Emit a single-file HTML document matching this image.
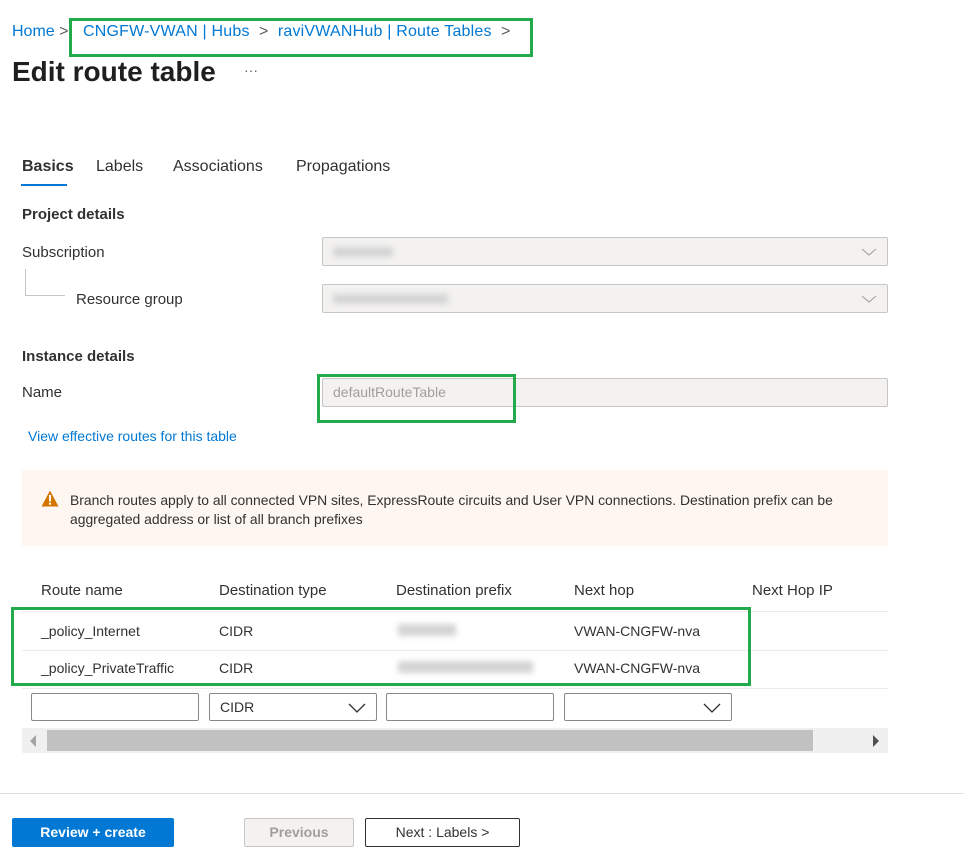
<!DOCTYPE html>
<html><head><meta charset="utf-8"><style>
*{margin:0;padding:0;box-sizing:border-box}
body{width:964px;height:863px;background:#fff;position:relative;overflow:hidden;font-family:"Segoe UI","Liberation Sans",sans-serif;color:#323130;font-size:15px}
.a{position:absolute;white-space:nowrap}
.lk{color:#0078d4}
.b{font-weight:600}
.g{position:absolute;border:3px solid #22aa4c}
.dd{position:absolute;background:#f3f2f1;border:1px solid #c8c6c4;border-radius:2px}
.in{position:absolute;background:#fff;border:1px solid #8a8886;border-radius:2px;height:28px}
.hl{position:absolute;height:1px;background:#edebe9;left:22px;width:866px}
.blur{position:absolute;background:#d4d4d4;filter:blur(3px)}
</style></head><body>
<div class="a lk" style="left:12px;top:23px;font-size:16px">Home <span style="color:#605e5c">&gt;</span></div>
<div class="a lk" style="left:83px;top:23px;font-size:16px;letter-spacing:0.2px">CNGFW-VWAN | Hubs <span style="color:#605e5c">&nbsp;&gt;&nbsp;</span> raviVWANHub | Route Tables <span style="color:#605e5c">&nbsp;&gt;</span></div>
<div class="g" style="left:69px;top:18px;width:464px;height:39px"></div>
<div class="a b" style="left:12px;top:56px;font-size:28px;color:#201f1e">Edit route table</div>
<div class="a" style="left:244px;top:62px;font-size:14px;color:#605e5c">···</div>

<div class="a b" style="left:22px;top:158px;font-size:16px">Basics</div>
<div style="position:absolute;left:21px;top:184px;width:46px;height:2px;background:#0078d4"></div>
<div class="a" style="left:96px;top:158px;font-size:16px">Labels</div>
<div class="a" style="left:173px;top:158px;font-size:16px">Associations</div>
<div class="a" style="left:296px;top:158px;font-size:16px">Propagations</div>

<div class="a b" style="left:22px;top:206px;font-size:15px">Project details</div>
<div class="a" style="left:22px;top:244px">Subscription</div>
<div style="position:absolute;left:25px;top:269px;width:40px;height:27px;border-left:1px solid #c8c6c4;border-bottom:1px solid #c8c6c4"></div>
<div class="a" style="left:76px;top:291px">Resource group</div>
<div class="dd" style="left:322px;top:237px;width:566px;height:29px"><div class="blur" style="left:10px;top:9px;width:60px;height:10px"></div>
<svg style="position:absolute;right:10px;top:9px" width="16" height="10"><path d="M1 2l7 6 7-6" fill="none" stroke="#a19f9d" stroke-width="1.1"/></svg></div>
<div class="dd" style="left:322px;top:284px;width:566px;height:29px"><div class="blur" style="left:10px;top:9px;width:115px;height:10px"></div>
<svg style="position:absolute;right:10px;top:9px" width="16" height="10"><path d="M1 2l7 6 7-6" fill="none" stroke="#a19f9d" stroke-width="1.1"/></svg></div>

<div class="a b" style="left:22px;top:348px">Instance details</div>
<div class="a" style="left:22px;top:384px">Name</div>
<div class="dd" style="left:322px;top:378px;width:566px;height:29px"><div class="a" style="left:10px;top:5px;color:#a19f9d;font-size:14px">defaultRouteTable</div></div>
<div class="g" style="left:317px;top:374px;width:199px;height:49px"></div>
<div class="a lk" style="left:28px;top:428px;font-size:14px">View effective routes for this table</div>

<div style="position:absolute;left:22px;top:470px;width:866px;height:76px;background:#fdf6f1"></div>
<svg style="position:absolute;left:41px;top:490px" width="18" height="17"><path d="M9 0.5L17.5 16.5H0.5Z" fill="#d47500"/><rect x="8" y="5" width="2" height="6.5" fill="#fff"/><rect x="8" y="12.7" width="2" height="2" fill="#fff"/></svg>
<div class="a" style="left:70px;top:491px;font-size:13.9px;line-height:19px;color:#323130">Branch routes apply to all connected VPN sites, ExpressRoute circuits and User VPN connections. Destination prefix can be<br>aggregated address or list of all branch prefixes</div>

<div class="a" style="left:41px;top:582px;font-weight:500">Route name</div>
<div class="a" style="left:219px;top:582px;font-weight:500">Destination type</div>
<div class="a" style="left:396px;top:582px;font-weight:500">Destination prefix</div>
<div class="a" style="left:574px;top:582px;font-weight:500">Next hop</div>
<div class="a" style="left:752px;top:582px;font-weight:500">Next Hop IP</div>
<div class="hl" style="top:611px"></div>
<div class="hl" style="top:650px"></div>
<div class="hl" style="top:688px"></div>
<div class="a" style="left:41px;top:623px;font-size:14px">_policy_Internet</div>
<div class="a" style="left:219px;top:623px;font-size:14px">CIDR</div>
<div class="blur" style="left:398px;top:624px;width:58px;height:12px"></div>
<div class="a" style="left:574px;top:623px;font-size:14px">VWAN-CNGFW-nva</div>
<div class="a" style="left:41px;top:660px;font-size:14px">_policy_PrivateTraffic</div>
<div class="a" style="left:219px;top:660px;font-size:14px">CIDR</div>
<div class="blur" style="left:398px;top:661px;width:135px;height:12px"></div>
<div class="a" style="left:574px;top:660px;font-size:14px">VWAN-CNGFW-nva</div>
<div class="g" style="left:11px;top:607px;width:740px;height:79px"></div>

<div class="in" style="left:31px;top:693px;width:168px"></div>
<div class="in" style="left:209px;top:693px;width:168px"><div class="a" style="left:10px;top:5px;font-size:14px">CIDR</div>
<svg style="position:absolute;right:10px;top:8px" width="18" height="12"><path d="M1 2l8 8 8-8" fill="none" stroke="#323130" stroke-width="1.3"/></svg></div>
<div class="in" style="left:386px;top:693px;width:168px"></div>
<div class="in" style="left:564px;top:693px;width:168px"><svg style="position:absolute;right:10px;top:8px" width="18" height="12"><path d="M1 2l8 8 8-8" fill="none" stroke="#323130" stroke-width="1.3"/></svg></div>

<div style="position:absolute;left:22px;top:728px;width:866px;height:25px;background:#f0f0f0"></div>
<div style="position:absolute;left:47px;top:730px;width:766px;height:21px;background:#c1c1c1"></div>
<svg style="position:absolute;left:30px;top:735px" width="8" height="12"><path d="M6 0L0 6L6 12Z" fill="#a3a3a3"/></svg>
<svg style="position:absolute;left:872px;top:735px" width="8" height="12"><path d="M1 0L7 6L1 12Z" fill="#505050"/></svg>

<div style="position:absolute;left:0;top:793px;width:964px;height:1px;background:#e1dfdd"></div>
<div class="a b" style="left:12px;top:818px;width:162px;height:29px;background:#0078d4;color:#fff;border-radius:2px;text-align:center;line-height:29px;font-size:14px">Review + create</div>
<div class="a b" style="left:244px;top:818px;width:110px;height:29px;background:#f3f2f1;color:#a19f9d;border:1px solid #c8c6c4;border-radius:2px;text-align:center;line-height:27px;font-size:14px">Previous</div>
<div class="a" style="left:365px;top:818px;width:155px;height:29px;background:#fff;color:#323130;border:1px solid #323130;border-radius:2px;text-align:center;line-height:27px;font-size:14px">Next : Labels &gt;</div>
</body></html>
